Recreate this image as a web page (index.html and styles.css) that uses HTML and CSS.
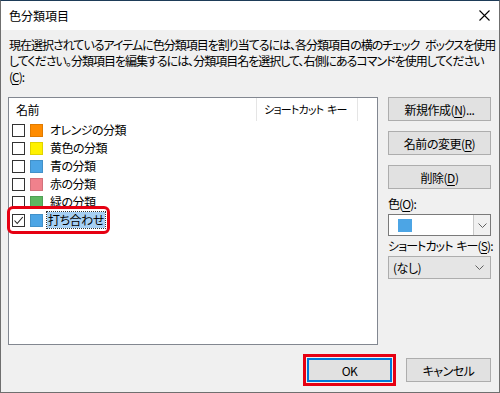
FILE: index.html
```html
<!DOCTYPE html>
<html lang="ja">
<head>
    <meta charset="UTF-8">
    <title>色分類項目</title>
    <link rel="stylesheet" href="styles.css">
</head>
<body>
    <div class="dialog">
        <div class="titlebar">
            <span class="title">色分類項目</span>
            <svg class="close" width="11" height="11" viewBox="0 0 11 11">
                <path d="M0.5 0.5 L10.5 10.5 M10.5 0.5 L0.5 10.5" stroke="#000" stroke-width="1.1" fill="none"/>
            </svg>
        </div>

        <div class="content">
            <p class="intro">現在選択されているアイテムに色分類項目を割り当てるには、各分類項目の横のチェック ボックスを使用<br>してください。分類項目を編集するには、分類項目名を選択して、右側にあるコマンドを使用してください<br>(<u>C</u>):</p>

            <div class="main">
                <div class="listbox">
                    <div class="list-header">
                        <span class="col-name">名前</span>
                        <span class="col-key">ショートカット キー</span>
                        <span class="col-rest"></span>
                    </div>
                    <div class="row">
                        <span class="check"></span>
                        <span class="swatch orange"></span>
                        <span class="label">オレンジの分類</span>
                    </div>
                    <div class="row">
                        <span class="check"></span>
                        <span class="swatch yellow"></span>
                        <span class="label">黄色の分類</span>
                    </div>
                    <div class="row">
                        <span class="check"></span>
                        <span class="swatch blue"></span>
                        <span class="label">青の分類</span>
                    </div>
                    <div class="row">
                        <span class="check"></span>
                        <span class="swatch red"></span>
                        <span class="label">赤の分類</span>
                    </div>
                    <div class="row">
                        <span class="check"></span>
                        <span class="swatch green"></span>
                        <span class="label">緑の分類</span>
                    </div>
                    <div class="row">
                        <span class="row-inner marked">
                            <span class="check checked">
                                <svg width="11" height="11" viewBox="0 0 11 11">
                                    <path d="M1.5 5.5 L4.2 8.5 L9.8 2" stroke="#222" stroke-width="1.1" fill="none"/>
                                </svg>
                            </span>
                            <span class="swatch blue"></span>
                            <span class="label selected">打ち合わせ</span>
                        </span>
                    </div>
                </div>

                <div class="side">
                    <button class="btn">新規作成(<u>N</u>)...</button>
                    <button class="btn">名前の変更(<u>R</u>)</button>
                    <button class="btn">削除(<u>D</u>)</button>
                    <div class="field-label">色(<u>O</u>):</div>
                    <div class="combo">
                        <span class="swatch blue big"></span>
                        <span class="combo-btn">
                            <svg width="9" height="5" viewBox="0 0 9 5"><path d="M0.5 0.5 L4.5 4.5 L8.5 0.5" stroke="#606060" fill="none"/></svg>
                        </span>
                    </div>
                    <div class="field-label">ショートカット キー(<u>S</u>):</div>
                    <div class="combo plain">
                        <span class="combo-text">(なし)</span>
                        <svg width="9" height="5" viewBox="0 0 9 5"><path d="M0.5 0.5 L4.5 4.5 L8.5 0.5" stroke="#606060" fill="none"/></svg>
                    </div>
                </div>
            </div>

            <div class="footer">
                <button class="btn default">OK</button>
                <button class="btn">キャンセル</button>
            </div>
        </div>
    </div>
</body>
</html>
```

FILE: styles.css
```css
* {
    box-sizing: border-box;
}
body {
    margin: 0;
    font-family: "Noto Sans CJK JP", "Noto Sans", sans-serif;
    font-size: 12px;
    font-feature-settings: "palt";
    letter-spacing: -0.5px;
    word-spacing: 2px;
    color: #000;
}
u {
    text-decoration-thickness: 1px;
    text-underline-offset: 2px;
}
.dialog {
    width: 500px;
    height: 393px;
    display: flex;
    flex-direction: column;
    border: 1px solid #6f6f6f;
    border-top-color: #1d3b58;
    background: #f0f0f0;
    overflow: hidden;
}
.titlebar {
    height: 29px;
    flex-shrink: 0;
    background: #fff;
    display: flex;
    align-items: center;
    justify-content: space-between;
    padding: 0 9px 0 8px;
}
.title {
    letter-spacing: 0;
}
.content {
    flex: 1;
    padding: 7px 8px 0 7px;
}
.intro {
    margin: 0 0 0 1px;
    line-height: 16px;
    letter-spacing: -1px;
    word-spacing: 4px;
    white-space: nowrap;
}
.main {
    display: flex;
    gap: 10px;
    margin-top: 12px;
}
.listbox {
    width: 370px;
    height: 248px;
    background: #fff;
    border: 1px solid #828790;
}
.list-header {
    display: flex;
    height: 23px;
    align-items: center;
}
.list-header span {
    height: 23px;
    line-height: 23px;
}
.col-name {
    width: 248px;
    padding-left: 7px;
    border-right: 1px solid #e5e5e5;
}
.col-key {
    width: 101px;
    padding-left: 7px;
    font-size: 11px;
    letter-spacing: -0.8px;
    white-space: nowrap;
    border-right: 1px solid #e5e5e5;
}
.row {
    display: flex;
    align-items: center;
    height: 18px;
    padding-left: 3px;
}
.row-inner {
    display: flex;
    align-items: center;
    height: 18px;
}
.marked {
    outline: 3px solid #e60012;
    outline-offset: 2px;
    border-radius: 1px;
}
.check {
    width: 13px;
    height: 13px;
    border: 1px solid #333;
    background: #fff;
    display: flex;
    align-items: center;
    justify-content: center;
}
.swatch {
    width: 13px;
    height: 13px;
    margin-left: 5px;
    border: 1px solid rgba(0, 0, 0, 0.12);
}
.orange { background: #ff8c00; }
.yellow { background: #fff100; }
.blue { background: #4ca5e5; }
.red { background: #f0818c; }
.green { background: #5db761; }
.label {
    margin-left: 6px;
    line-height: 16px;
    padding: 0 1px;
    white-space: nowrap;
}
.selected {
    background: #a7d0f4;
    outline: 1px dotted #333;
    margin-left: 4px;
    padding: 0 1px;
}
.side {
    width: 103px;
    display: flex;
    flex-direction: column;
}
.btn {
    font: inherit;
    font-feature-settings: "palt";
    letter-spacing: -0.5px;
    height: 24px;
    background: #e1e1e1;
    border: 1px solid #adadad;
    padding: 0;
    color: #000;
    margin-bottom: 10px;
    white-space: nowrap;
}
.field-label {
    margin-top: -3px;
    height: 18px;
    line-height: 16px;
    white-space: nowrap;
    letter-spacing: -0.9px;
}
.combo {
    height: 22px;
    flex-shrink: 0;
    background: #fff;
    border: 1px solid #7a7a7a;
    display: flex;
    align-items: center;
    justify-content: space-between;
    margin-bottom: 5px;
}
.big {
    width: 14px;
    height: 13px;
    margin-left: 9px;
    border: none;
}
.combo-btn {
    width: 17px;
    height: 20px;
    border-left: 1px solid #c8c8c8;
    background: #f0f0f0;
    display: flex;
    align-items: center;
    justify-content: center;
}
.combo.plain {
    height: 23px;
    background: #e5e5e5;
    border-color: #adadad;
    padding: 0 6px 0 4px;
}
.footer {
    display: flex;
    justify-content: flex-end;
    gap: 14px;
    margin-top: 13px;
}
.footer .btn {
    width: 85px;
    margin: 0;
}
.btn.default {
    border: 2px solid #0078d7;
    outline: 3px solid #e60012;
    outline-offset: 1px;
    border-radius: 0;
}
```
